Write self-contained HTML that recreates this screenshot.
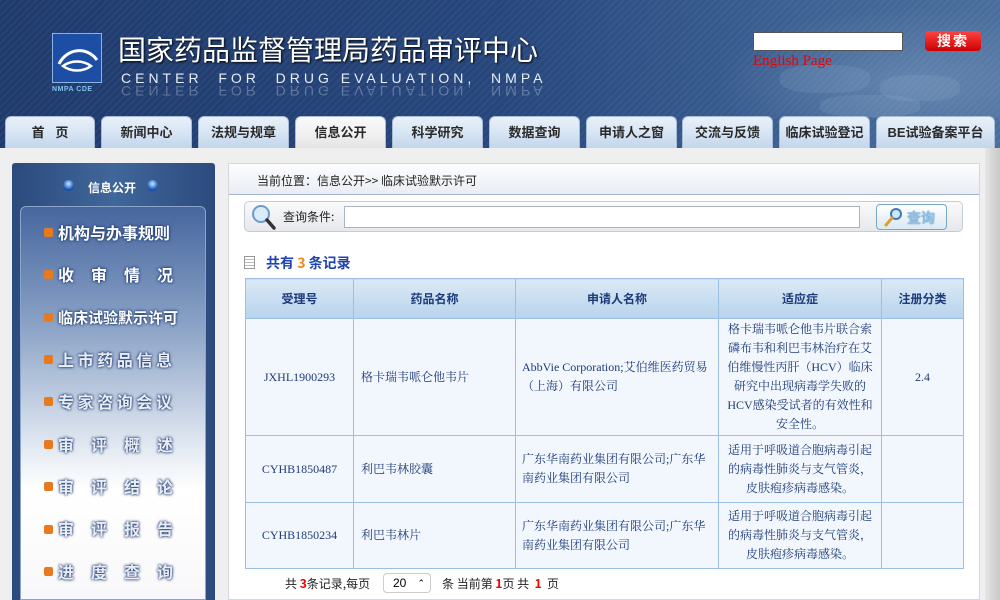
<!DOCTYPE html>
<html><head><meta charset="utf-8"><style>
*{margin:0;padding:0;box-sizing:border-box}
body{width:1000px;height:600px;overflow:hidden;position:relative;background:#efefef;font-family:"Liberation Sans","Noto Sans CJK SC",sans-serif}
.a{position:absolute}
#hdr{left:0;top:0;width:1000px;height:148px;background:linear-gradient(90deg,#1f3a6c 0%,#26467c 50%,#3c6193 80%,#4a6e9c 100%);overflow:hidden}
#hdr:before{content:"";position:absolute;inset:0;background:repeating-linear-gradient(135deg,rgba(255,255,255,0.04) 0 2px,rgba(0,0,0,0) 2px 5px)}
.pill{position:absolute;border-radius:40%;background:rgba(160,185,215,0.15)}
.tab{position:absolute;top:116px;height:32px;border-radius:6px 6px 0 0;background:linear-gradient(#e9f1fa,#d6e4f3 55%,#c3d6ec);font:bold 13px "Liberation Sans","Noto Sans CJK SC",sans-serif;color:#2a2a2a;text-align:center;line-height:32px;border:1px solid #a8bcd6;border-bottom:none}
.tab.on{background:linear-gradient(#fafafa,#f0f0f0 55%,#e4e4e4)}
#side{left:12px;top:163px;width:203px;height:437px;background:linear-gradient(90deg,#2c4a7e,#40679a 50%,#2c4a7e);border-radius:3px 3px 0 0}
#sidein{left:20px;top:206px;width:186px;height:394px;border:1px solid #8aa5c8;border-radius:6px 6px 0 0;background:linear-gradient(#46669e 0%,#8aa2c6 30%,#dfe6f0 60%,#fff 72%,#f8f8fa 100%)}
.si{position:absolute;left:58px;font:bold 16px "Noto Sans CJK SC",sans-serif;line-height:1;color:#fff;text-shadow:0 0 2px #203a70,0 0 3px #203a70;white-space:nowrap}
.si.d{color:#e8edf5}
.rss{position:absolute;left:44px;width:9px;height:9px;background:#e87a1e;border-radius:2px}
#main{left:228px;top:163px;width:752px;height:437px;background:#fff;border:1px solid #d4d8de}
table{position:absolute;left:245px;top:278px;border-collapse:collapse;font:12px "Liberation Serif","Noto Serif CJK SC",serif;color:#1d3b7a}
td{border:1px solid #9cc0e4;background:#f2f7fd;line-height:19px;vertical-align:middle}
th{border:1px solid #9cc0e4;background:linear-gradient(#dbe9f6,#b7d3ec);height:40px;font:bold 12px "Liberation Sans","Noto Sans CJK SC",sans-serif;color:#1d3b7a}
</style></head><body>
<div id="hdr" class="a">
 <div class="a" style="left:700px;top:0;width:300px;height:118px;background:radial-gradient(ellipse at 70% 70%,rgba(170,195,225,0.3),rgba(0,0,0,0) 65%)"></div>
 <div class="pill" style="left:780px;top:65px;width:90px;height:28px"></div>
 <div class="pill" style="left:880px;top:75px;width:80px;height:26px"></div>
 <div class="pill" style="left:820px;top:95px;width:100px;height:22px"></div>
 <div class="a" style="left:52px;top:33px;width:50px;height:50px;background:#1d4ea6;border:1px solid #8db2e0"><svg width="48" height="48" viewBox="0 0 48 48"><path d="M6 30 C14 14 34 12 44 26" stroke="#fff" stroke-width="3" fill="none"/><path d="M10 32 C18 26 30 26 38 32 C30 38 18 38 10 32Z" stroke="#fff" stroke-width="2.5" fill="none"/></svg></div>
 <div class="a" style="left:52px;top:86px;font:bold 7px 'Liberation Sans',sans-serif;color:#7fc2ea;letter-spacing:0.5px">NMPA CDE</div>
 <div class="a" style="left:118px;top:35px;font:28px/1 'Noto Sans CJK SC',sans-serif;color:#fff;text-shadow:1px 1px 2px #000;letter-spacing:0px">国家药品监督管理局药品审评中心</div>
 <div class="a" style="left:121px;top:71px;font:14px/1 'Liberation Sans',sans-serif;color:#e8eef6;letter-spacing:4px">CENTER&nbsp; FOR&nbsp; DRUG EVALUATION,&nbsp; NMPA</div>
 <div class="a" style="left:121px;top:84px;font:14px/1 'Liberation Sans',sans-serif;color:rgba(230,238,246,0.3);letter-spacing:4px;transform:scaleY(-1)">CENTER&nbsp; FOR&nbsp; DRUG EVALUATION,&nbsp; NMPA</div>
 <div class="a" style="left:753px;top:32px;width:150px;height:19px;background:#fff;border:1px solid #555"></div>
 <div class="a" style="left:925px;top:31px;width:56px;height:20px;background:linear-gradient(#f44,#c00);border-radius:4px;color:#fff;font:bold 14px 'Noto Sans CJK SC',sans-serif;text-align:center;line-height:20px;letter-spacing:2px">搜索</div>
 <div class="a" style="left:753px;top:53px;font:15px 'Liberation Serif',serif;color:#e00">English Page</div>
</div>
<div class="tab" style="left:5px;width:90px">首&nbsp;&nbsp;&nbsp;页</div>
<div class="tab" style="left:101px;width:91px">新闻中心</div>
<div class="tab" style="left:198px;width:91px">法规与规章</div>
<div class="tab on" style="left:295px;width:91px">信息公开</div>
<div class="tab" style="left:392px;width:91px">科学研究</div>
<div class="tab" style="left:489px;width:91px">数据查询</div>
<div class="tab" style="left:586px;width:91px">申请人之窗</div>
<div class="tab" style="left:682px;width:91px">交流与反馈</div>
<div class="tab" style="left:779px;width:91px">临床试验登记</div>
<div class="tab" style="left:876px;width:119px">BE试验备案平台</div>
<div class="a" style="left:985px;top:148px;width:15px;height:452px;background:linear-gradient(90deg,#e6e6e6,#c8c8c8)"></div>
<div id="side" class="a"></div>
<div class="a" style="left:63px;top:180px;width:11px;height:11px;border-radius:50%;background:radial-gradient(circle at 50% 35%,#cfe6ff,#1a60c0 60%,#0a2a60)"></div>
<div class="a" style="left:147px;top:180px;width:11px;height:11px;border-radius:50%;background:radial-gradient(circle at 50% 35%,#cfe6ff,#1a60c0 60%,#0a2a60)"></div>
<div class="a" style="left:88px;top:179px;font:bold 12px 'Noto Sans CJK SC',sans-serif;color:#fff">信息公开</div>
<div id="sidein" class="a"></div>
<div class="rss" style="top:228px"></div><div class="si" style="top:224px">机构与办事规则</div>
<div class="rss" style="top:270px"></div><div class="si" style="top:266px;letter-spacing:17px">收审情况</div>
<div class="rss" style="top:313px"></div><div class="si" style="top:310px;font-size:15px">临床试验默示许可</div>
<div class="rss" style="top:355px"></div><div class="si d" style="top:351px;letter-spacing:3.6px">上市药品信息</div>
<div class="rss" style="top:397px"></div><div class="si d" style="top:393px;letter-spacing:3.6px">专家咨询会议</div>
<div class="rss" style="top:440px"></div><div class="si d" style="top:436px;letter-spacing:17px">审评概述</div>
<div class="rss" style="top:482px"></div><div class="si d" style="top:478px;letter-spacing:17px">审评结论</div>
<div class="rss" style="top:525px"></div><div class="si d" style="top:520px;letter-spacing:17px">审评报告</div>
<div class="rss" style="top:567px"></div><div class="si d" style="top:563px;letter-spacing:17px">进度查询</div>
<div id="main" class="a"></div>
<div class="a" style="left:229px;top:164px;width:750px;height:31px;background:linear-gradient(#fdfdfe,#e9edf3);border-bottom:1px solid #9fb3cc"></div>
<div class="a" style="left:257px;top:172px;font:12px 'Noto Sans CJK SC',sans-serif;color:#222">当前位置：信息公开&gt;&gt; 临床试验默示许可</div>
<div class="a" style="left:244px;top:201px;width:719px;height:31px;border:1px solid #c4ccd6;border-radius:5px;background:linear-gradient(#fafafa,#e6e8ec)"></div>
<svg class="a" style="left:250px;top:203px" width="26" height="28"><circle cx="11" cy="11" r="8" fill="#d8ecfb" stroke="#6e9cc8" stroke-width="2"/><path d="M17 17 L24 25" stroke="#333" stroke-width="3.5" stroke-linecap="round"/></svg>
<div class="a" style="left:283px;top:208px;font:12px 'Noto Sans CJK SC',sans-serif;color:#222">查询条件:</div>
<div class="a" style="left:344px;top:206px;width:516px;height:22px;background:#fff;border:1px solid #aab4c0"></div>
<div class="a" style="left:876px;top:204px;width:71px;height:26px;border:1px solid #7aa6c8;border-radius:4px;background:linear-gradient(#fff,#dbe8f2)"></div>
<svg class="a" style="left:883px;top:207px" width="20" height="20"><circle cx="13" cy="7" r="5" fill="#cfe6f6" stroke="#3a7ab8" stroke-width="2"/><path d="M9 11 L3 18" stroke="#d9a030" stroke-width="3" stroke-linecap="round"/></svg>
<div class="a" style="left:907px;top:208px;font:bold 14px 'Noto Sans CJK SC',sans-serif;color:#8ec3e6;text-shadow:0 0 1px #2a6aa0">查询</div>
<div class="a" style="left:244px;top:256px;width:11px;height:13px;border:1px solid #999;background:repeating-linear-gradient(#fff 0 2px,#bbb 2px 3px)"></div>
<div class="a" style="left:266px;top:253px;font:bold 14px 'Noto Sans CJK SC',sans-serif;color:#1f43b0">共有 <span style="color:#f08a20">3</span> 条记录</div>
<table>
<tr><th style="width:108px">受理号</th><th style="width:162px">药品名称</th><th style="width:203px">申请人名称</th><th style="width:163px">适应症</th><th style="width:82px">注册分类</th></tr>
<tr style="height:117px"><td style="text-align:center">JXHL1900293</td><td style="padding-left:7px">格卡瑞韦哌仑他韦片</td><td style="padding:0 6px">AbbVie Corporation;艾伯维医药贸易（上海）有限公司</td><td style="text-align:center;padding:0 6px">格卡瑞韦哌仑他韦片联合索磷布韦和利巴韦林治疗在艾伯维慢性丙肝（HCV）临床研究中出现病毒学失败的HCV感染受试者的有效性和安全性。</td><td style="text-align:center">2.4</td></tr>
<tr style="height:67px"><td style="text-align:center">CYHB1850487</td><td style="padding-left:7px">利巴韦林胶囊</td><td style="padding:0 6px">广东华南药业集团有限公司;广东华南药业集团有限公司</td><td style="text-align:center;padding:0 6px">适用于呼吸道合胞病毒引起的病毒性肺炎与支气管炎，皮肤疱疹病毒感染。</td><td></td></tr>
<tr style="height:66px"><td style="text-align:center">CYHB1850234</td><td style="padding-left:7px">利巴韦林片</td><td style="padding:0 6px">广东华南药业集团有限公司;广东华南药业集团有限公司</td><td style="text-align:center;padding:0 6px">适用于呼吸道合胞病毒引起的病毒性肺炎与支气管炎，皮肤疱疹病毒感染。</td><td></td></tr>
</table>
<div class="a" style="left:285px;top:575px;font:12px 'Noto Sans CJK SC',sans-serif;color:#222;white-space:nowrap">共 <b style="color:#e00">3</b>条记录,每页</div>
<div class="a" style="left:383px;top:573px;width:48px;height:20px;border:1px solid #ccc;border-radius:4px;background:#fff;font:12px 'Liberation Sans',sans-serif;line-height:18px;padding-left:9px">20 <span style="position:absolute;right:5px;font-size:9px">⌃</span></div>
<div class="a" style="left:442px;top:575px;font:12px 'Noto Sans CJK SC',sans-serif;color:#222;white-space:nowrap">条 当前第 <b style="color:#e00">1</b>页 共 &nbsp;<b style="color:#e00">1</b> &nbsp;页</div>
</body></html>
